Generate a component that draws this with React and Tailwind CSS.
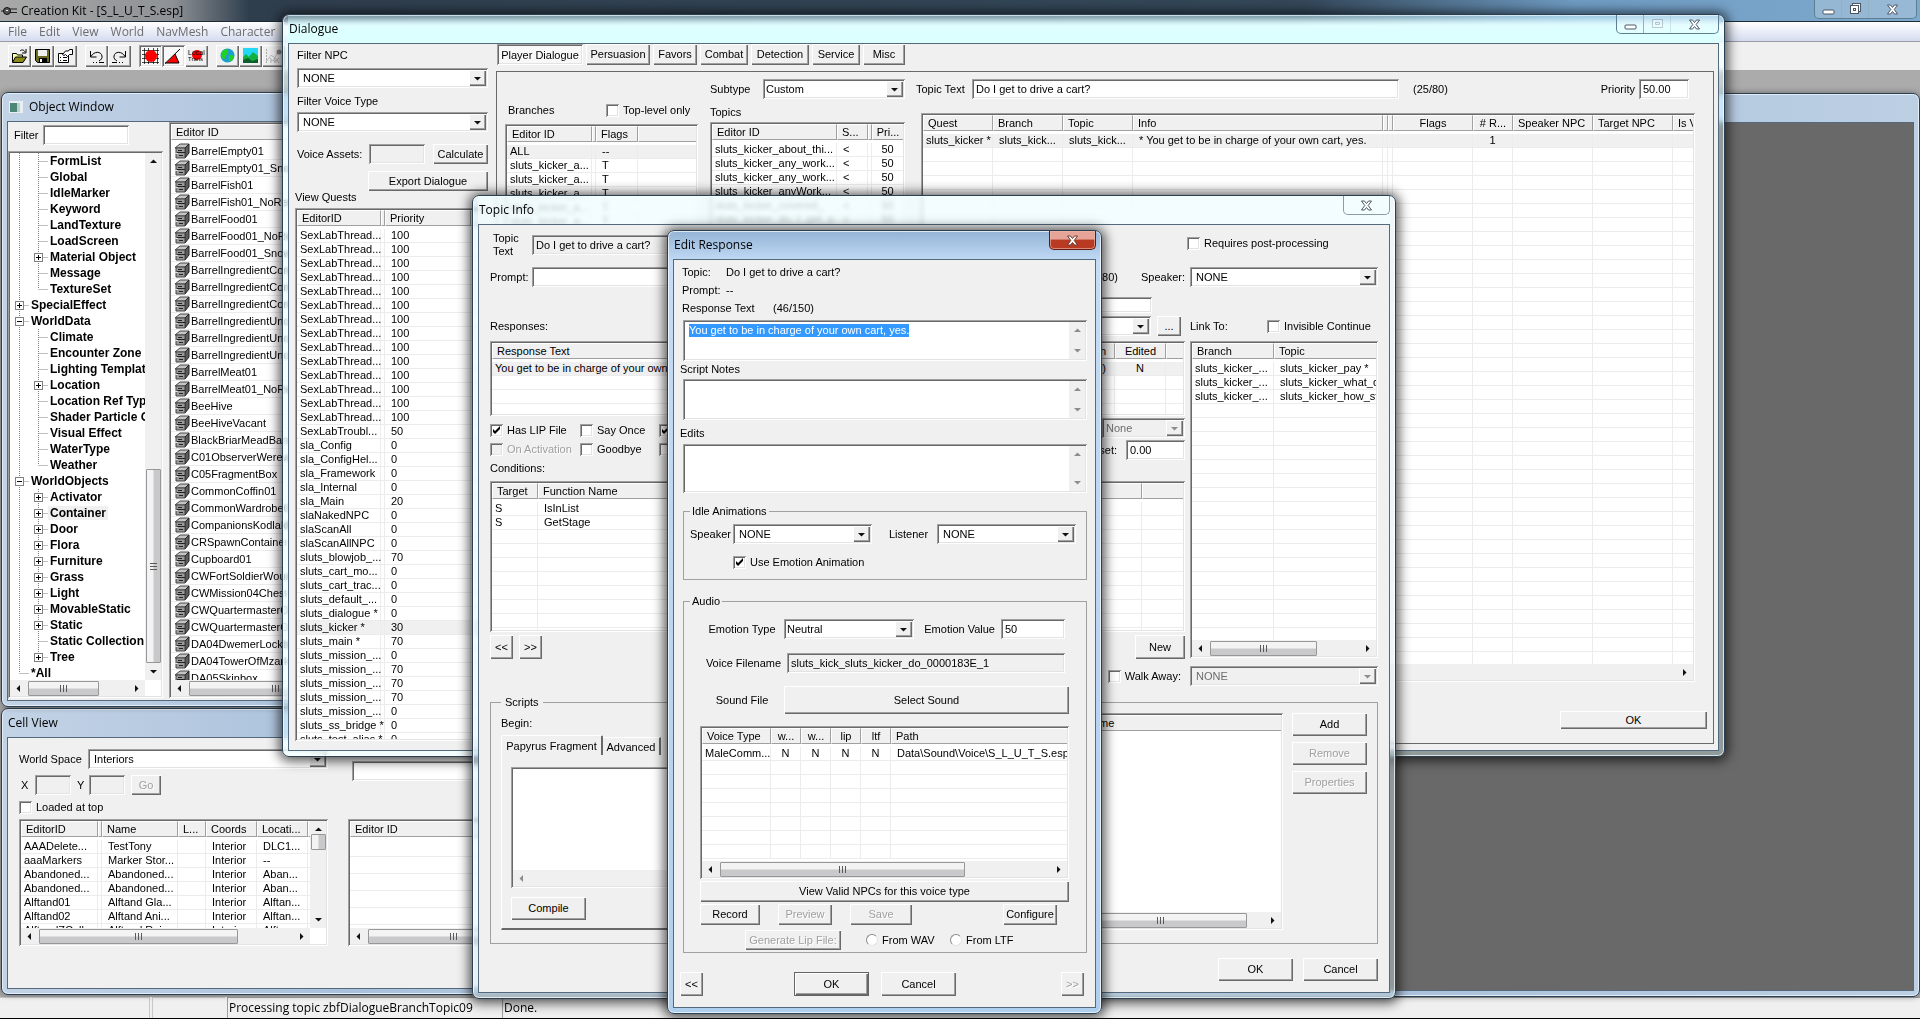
import clsx from 'clsx';

const SUNKEN = 'shadow-[inset_1px_1px_#a0a0a0,inset_-1px_-1px_#fff,inset_2px_2px_#696969,inset_-2px_-2px_#e3e3e3]';
const RAISED = 'shadow-[inset_1px_1px_#fff,inset_-1px_-1px_#696969,inset_-2px_-2px_#a0a0a0]';

const TREE = [
  ['FormList'], ['Global'], ['IdleMarker'], ['Keyword'], ['LandTexture'], ['LoadScreen'],
  ['Material Object', '+'], ['Message'], ['TextureSet', '', 'last'],
  ['SpecialEffect', '+', 'root'], ['WorldData', '-', 'root'],
  ['Climate'], ['Encounter Zone'], ['Lighting Template'], ['Location', '+'], ['Location Ref Type'],
  ['Shader Particle Geometry'], ['Visual Effect'], ['WaterType'], ['Weather', '', 'last'],
  ['WorldObjects', '-', 'root'],
  ['Activator', '+'], ['Container', '+'], ['Door', '+'], ['Flora', '+'], ['Furniture', '+'], ['Grass', '+'],
  ['Light', '+'], ['MovableStatic', '+'], ['Static', '+'], ['Static Collection'], ['Tree', '+', 'last'],
  ['*All', '', 'end'],
];

const CONTAINERS = [
  'BarrelEmpty01', 'BarrelEmpty01_Snow', 'BarrelFish01', 'BarrelFish01_NoRespawn', 'BarrelFood01',
  'BarrelFood01_NoRespawn', 'BarrelFood01_Snow', 'BarrelIngredientCommon01', 'BarrelIngredientCommon02',
  'BarrelIngredientCommon03', 'BarrelIngredientUncommon01', 'BarrelIngredientUncommon02',
  'BarrelIngredientUncommon03', 'BarrelMeat01', 'BarrelMeat01_NoRespawn', 'BeeHive', 'BeeHiveVacant',
  'BlackBriarMeadBarrel', 'C01ObserverWerewolf', 'C05FragmentBox', 'CommonCoffin01', 'CommonWardrobe01',
  'CompanionsKodlakBox', 'CRSpawnContainer', 'Cupboard01', 'CWFortSoldierWound', 'CWMission04Chest',
  'CWQuartermasterChest', 'CWQuartermasterCrate', 'DA04DwemerLockbox', 'DA04TowerOfMzark', 'DA05Skinbox',
];

const QUESTS = [
  ...Array.from({ length: 14 }, () => ['SexLabThread...', '', '100']),
  ['SexLabTroubl...', '', '50'],
  ['sla_Config', '', '0'],
  ['sla_ConfigHel...', '', '0'],
  ['sla_Framework', '', '0'],
  ['sla_Internal', '', '0'],
  ['sla_Main', '', '20'],
  ['slaNakedNPC', '', '0'],
  ['slaScanAll', '', '0'],
  ['slaScanAllNPC', '', '0'],
  ['sluts_blowjob_...', '', '70'],
  ['sluts_cart_mo...', '', '0'],
  ['sluts_cart_trac...', '', '0'],
  ['sluts_default_...', '', '0'],
  ['sluts_dialogue *', '', '0'],
  ['sluts_kicker *', '', '30'],
  ['sluts_main *', '', '70'],
  ['sluts_mission_...', '', '0'],
  ['sluts_mission_...', '', '70'],
  ['sluts_mission_...', '', '70'],
  ['sluts_mission_...', '', '70'],
  ['sluts_mission_...', '', '0'],
  ['sluts_ss_bridge *', '', '0'],
  ['sluts_test_alias *', '', '0'],
];

const CELLS = [
  ['AAADelete...', '', 'TestTony', '', 'Interior', 'DLC1...'],
  ['aaaMarkers', '', 'Marker Stor...', '', 'Interior', '--'],
  ['Abandoned...', '', 'Abandoned...', '', 'Interior', 'Aban...'],
  ['Abandoned...', '', 'Abandoned...', '', 'Interior', 'Aban...'],
  ['Alftand01', '', 'Alftand Gla...', '', 'Interior', 'Alftan...'],
  ['Alftand02', '', 'Alftand Ani...', '', 'Interior', 'Alftan...'],
  ['AlftandZCell', '', 'Alftand Rui...', '', 'Interior', 'Alftan...'],
];

function Button({ className, children, primary, disabled }) {
  return (
    <button
      type="button"
      disabled={disabled}
      className={clsx(
        'shrink-0 whitespace-nowrap bg-[#f0f0f0] text-center leading-[13px]',
        primary ? 'border border-[#646464]' : '',
        disabled ? 'text-[#a0a0a0] [text-shadow:1px_1px_#fff]' : 'text-black',
        RAISED,
        className,
      )}
    >
      {children}
    </button>
  );
}

function Arrow({ dir = 'down', muted }) {
  const d = {
    down: 'M1 3h7L4.5 6.5z',
    up: 'M1 6h7L4.5 2.5z',
    left: 'M6 1v7L2.5 4.5z',
    right: 'M3 1v7l3.500-3.500z',
  }[dir];
  return (
    <svg width="9" height="9" viewBox="0 0 9 9" aria-hidden="true">
      <path d={d} fill={muted ? '#8c8c8c' : '#111'} />
    </svg>
  );
}

function Select({ id, label, value, disabled, className, pad = 'pl-1' }) {
  return (
    <div className={clsx('flex h-5 shrink-0 p-[2px]', SUNKEN, disabled ? 'bg-[#f0f0f0]' : 'bg-white', className)}>
      <select
        id={id}
        aria-label={label}
        disabled={disabled}
        defaultValue={value}
        className={clsx('min-w-0 flex-1 appearance-none bg-transparent outline-none', pad, disabled ? 'text-[#6d6d6d]' : 'text-black')}
      >
        <option>{value}</option>
      </select>
      <span className={clsx('grid w-[17px] place-items-center bg-[#f0f0f0]', RAISED)}>
        <Arrow muted={disabled} />
      </span>
    </div>
  );
}

function Input({ id, label, value = '', disabled, height = 'h-5', className }) {
  return (
    <input
      id={id}
      aria-label={label}
      defaultValue={value}
      readOnly={disabled}
      className={clsx('min-w-0 shrink-0 px-1 text-black outline-none', height, SUNKEN, disabled ? 'bg-[#f0f0f0]' : 'bg-white', className)}
    />
  );
}

function Check({ label, checked, disabled, className }) {
  return (
    <label className={clsx('flex h-4 items-center gap-1 whitespace-nowrap', disabled && 'text-[#a0a0a0] [text-shadow:1px_1px_#fff]', className)}>
      <span className="grid">
        <input
          type="checkbox"
          defaultChecked={checked}
          disabled={disabled}
          className={clsx('peer col-start-1 row-start-1 size-[13px] appearance-none', SUNKEN, disabled ? 'bg-[#f0f0f0]' : 'bg-white')}
        />
        <svg className="pointer-events-none invisible col-start-1 row-start-1 peer-checked:visible" width="13" height="13" viewBox="0 0 13 13">
          <path d="M3 5v3l2 2 5-5V2L5 7z" fill="#000" />
        </svg>
      </span>
      {label}
    </label>
  );
}

function Radio({ label, className }) {
  return (
    <label className={clsx('flex items-center gap-1 whitespace-nowrap', className)}>
      <input type="radio" name="lip-source" className="size-3 appearance-none rounded-full border border-[#8a8a8a] border-r-[#e3e3e3] border-b-[#e3e3e3] bg-white" />
      {label}
    </label>
  );
}

function HScroll({ thumb, muted, className }) {
  return (
    <div className={clsx('flex h-4 shrink-0 items-center bg-[#f0f0f0] px-1', className)}>
      <Arrow dir="left" muted={muted} />
      <span className="flex-1 pl-[5px]">
        {thumb && (
          <span className={clsx('flex h-[15px] items-center justify-center gap-[2px] rounded-[1px] border border-[#979797] bg-linear-to-b from-[#f3f3f3] from-45% to-[#c9c9cc] to-55%', thumb)}>
            <i className="h-[7px] w-px bg-[#5a5a5a]" />
            <i className="h-[7px] w-px bg-[#5a5a5a]" />
            <i className="h-[7px] w-px bg-[#5a5a5a]" />
          </span>
        )}
      </span>
      <Arrow dir="right" muted={muted} />
    </div>
  );
}

function VScroll({ thumb, top, muted, grip }) {
  return (
    <div className="flex w-4 shrink-0 flex-col items-center bg-[#f0f0f0] py-1">
      <Arrow dir="up" muted={muted} />
      <span className={clsx('w-[15px] flex-1', top)}>
        {thumb && (
          <span className={clsx('flex flex-col items-center justify-center gap-[2px] rounded-[1px] border border-[#979797] bg-linear-to-r from-[#f3f3f3] from-45% to-[#c9c9cc] to-55%', thumb)}>
            {grip && [0, 1, 2].map(i => <i key={i} className="h-px w-[7px] bg-[#5a5a5a]" />)}
          </span>
        )}
      </span>
      <Arrow dir="down" muted={muted} />
    </div>
  );
}

// Report-style list: header strip, grid lines, blank rows down to the bottom edge
function ListView({ cols, rows = [], blank = 0, selected, tall, hThumb, hMuted, vThumb, className, icon, label }) {
  const all = [...rows, ...Array.from({ length: blank }, () => [])];
  return (
    <div className={clsx('flex flex-col overflow-hidden bg-white p-[2px]', SUNKEN, className)}>
      <div className="flex min-h-0 flex-1">
        <div className="min-w-0 flex-1 overflow-hidden">
          <table aria-label={label} className="w-full table-fixed border-separate border-spacing-0">
            <colgroup>
              {cols.map((c, i) => <col key={i} className={c[1]} />)}
            </colgroup>
            <thead>
              <tr>
                {cols.map((c, i) => (
                  <th key={i} className="p-0 pb-[3px] text-left font-normal">
                    <div className={clsx(
                      'h-4 overflow-hidden whitespace-nowrap border-t border-l border-t-white border-l-white border-b border-b-[#a0a0a0] bg-[#f0f0f0] leading-[15px]',
                      c[0] && !c[2] && 'pl-1',
                      c[2],
                      i < cols.length - 1 && 'border-r border-r-[#a0a0a0]',
                    )}>
                      {c[0]}
                    </div>
                  </th>
                ))}
              </tr>
            </thead>
            <tbody>
              {all.map((r, ri) => (
                <tr key={ri} className={ri === selected ? 'bg-[#f0f0f0]' : ''}>
                  {cols.map((c, i) => (
                    <td key={i} className={clsx(
                      'border-b border-b-[#ececec] py-0 pr-0 whitespace-nowrap',
                      i < cols.length - 1 && 'border-r border-r-[#ececec]',
                      tall ? 'h-[17px] leading-4' : 'h-[14px] leading-[13px]',
                      !c[2] && (i === 0 ? 'pl-[3px]' : 'pl-[6px]'),
                      c[2],
                    )}>
                      {icon && i === 0 && r[0] ? <span className="flex items-center gap-px"><ContainerIcon />{r[0]}</span> : r[i]}
                    </td>
                  ))}
                </tr>
              ))}
            </tbody>
          </table>
        </div>
        {vThumb && <VScroll thumb={vThumb} />}
      </div>
      {(hThumb || hMuted) && <HScroll thumb={hThumb} muted={hMuted} className={vThumb && 'mr-4'} />}
    </div>
  );
}

function Memo({ id, label, value, className }) {
  return (
    <div className={clsx('flex bg-white p-[2px]', SUNKEN, className)}>
      <div className="min-w-0 flex-1 pt-[2px] pl-1">
        {value
          ? <textarea id={id} aria-label={label} defaultValue={value} rows="1" className="field-sizing-content block h-[13px] resize-none overflow-hidden bg-[#3399ff] leading-[13px] whitespace-nowrap text-white outline-none" />
          : <textarea id={id} aria-label={label} className="block size-full resize-none outline-none" />}
      </div>
      <VScroll muted />
    </div>
  );
}

function ContainerIcon() {
  return (
    <svg className="shrink-0" width="15" height="16" viewBox="0 0 15 16" aria-hidden="true">
      <path d="M0 5l5-4h9l-4 4z" fill="#c4c4c4" stroke="#444" />
      <path d="M10 5l4-4v9l-4 5z" fill="#5c5c5c" stroke="#222" />
      <path d="M1 5h9v10H1z" fill="#9a9a9a" stroke="#444" />
      <path d="M2 9.500h8M3 7.500h4M4 12.500h4" stroke="#222" />
      <path d="M0 10h3v1H0z" fill="#ddd" />
    </svg>
  );
}

function Guide({ kind, box }) {
  const v = { line: 'M9.500 0v16', tee: 'M9.500 0v16M9.500 8.500H19', elbow: 'M9.500 0v8M9.500 8.500H19' }[kind];
  return (
    <svg className="shrink-0" width="19" height="16" viewBox="0 0 19 16" aria-hidden="true">
      <path d={v} stroke="#808080" strokeDasharray="1 1" fill="none" />
      {box && (
        <>
          <rect x="5.500" y="4.500" width="8" height="8" fill="#fff" stroke="#808080" />
          <path d={box === '+' ? 'M7 8.500h5M9.500 6v5' : 'M7 8.500h5'} stroke="#000" />
        </>
      )}
    </svg>
  );
}

function TreeRow({ name, box, kind }) {
  const root = kind === 'root' || kind === 'end';
  return (
    <li className="flex h-4 items-center whitespace-nowrap">
      {root
        ? <Guide kind={kind === 'end' ? 'elbow' : 'tee'} box={box} />
        : <><Guide kind="line" /><Guide kind={kind === 'last' ? 'elbow' : 'tee'} box={box} /></>}
      <span className={clsx('px-[2px]', name === 'Container' && 'bg-[#f0f0f0]')}>{name}</span>
    </li>
  );
}

function CloseGlyph({ className = 'text-[#4c5764]' }) {
  return (
    <svg className={className} width="13" height="11" viewBox="0 0 13 11" aria-hidden="true">
      <path d="M1.500 1h3l2 2.500L8.500 1h3l-3.300 4.500L11.500 10h-3l-2-2.500-2 2.500h-3l3.300-4.500z" fill="#fff" stroke="currentColor" />
    </svg>
  );
}

function CaptionButtons({ dimMax }) {
  return (
    <div className="flex h-[19px] rounded-b-[5px] border border-t-0 border-[#5d7f92] bg-white/20">
      <button type="button" aria-label="Minimize" className="grid w-[27px] place-items-center border-r border-[#8fb3c2]">
        <svg width="13" height="11" viewBox="0 0 13 11"><rect x="1" y="6" width="11" height="4" rx="1" fill="#fff" stroke="#4c5764" /></svg>
      </button>
      <button type="button" aria-label="Maximize" className={clsx('grid w-[27px] place-items-center border-r border-[#8fb3c2]', dimMax && 'opacity-30')}>
        <svg width="13" height="12" viewBox="0 0 13 12">
          {dimMax
            ? <path d="M1.500 1.500h10v8h-10zM4.500 4.500h4v2h-4z" fill="#fff" stroke="#4c5764" />
            : (
              <>
                <rect x="3.500" y="0.500" width="8" height="8" fill="#fff" stroke="#4c5764" />
                <rect x="1.500" y="2.500" width="8" height="8" fill="#fff" stroke="#4c5764" />
                <rect x="4.500" y="5.500" width="2" height="2" fill="#fff" stroke="#4c5764" />
              </>
            )}
        </svg>
      </button>
      <button type="button" aria-label="Close" className="grid w-[47px] place-items-center"><CloseGlyph /></button>
    </div>
  );
}

function Win({ title, icon, className, glass, buttons, font, children }) {
  return (
    <section
      aria-label={title}
      className={clsx('absolute flex flex-col rounded-[7px] border border-[#2b3f52] px-[5px] pb-[5px] text-[11px] leading-[14px] text-black', glass, font, className)}
    >
      <header className="flex h-7 shrink-0 items-start justify-between">
        <h2 className="flex h-7 items-center gap-[6px] pl-px font-['Open_Sans',sans-serif] text-[12px]">{icon}{title}</h2>
        {buttons}
      </header>
      <div className="flex min-h-0 flex-1 flex-col overflow-hidden border border-[#55697d] bg-[#f0f0f0]">{children}</div>
    </section>
  );
}

const SANS = "font-['Liberation_Sans',sans-serif]";
const BLUE = 'bg-linear-to-r from-[#c3d3e6] via-[#a9c0db] to-[#bccfe3] shadow-[inset_0_0_0_1px_#e4eef8,0_0_6px_#0006]';
const DEEP = 'shadow-[inset_0_0_0_1px_#ffffffb0,0_1px_12px_3px_#000a]';

function ObjectWindow() {
  return (
    <Win
      title="Object Window"
      font={SANS}
      glass={BLUE}
      className="top-[22px] left-px h-[615px] w-[700px]"
      icon={(
        <svg className="ml-px" width="14" height="12" viewBox="0 0 14 12" aria-hidden="true">
          <rect width="14" height="12" fill="#e8eef2" />
          <rect x="1" y="2" width="7" height="9" fill="#4d8577" />
          <rect x="8" y="2" width="3" height="9" fill="#b9cfd0" />
        </svg>
      )}
    >
      <div className="flex min-h-0 flex-1 pb-[2px]">
        <div className="flex w-[155px] shrink-0 flex-col pt-[3px]">
          <div className="flex items-center pl-[6px]">
            <label htmlFor="obj-filter" className="w-[29px]">Filter</label>
            <Input id="obj-filter" className="w-[86px]" />
          </div>
          <div className={clsx('mt-[6px] flex min-h-0 flex-1 flex-col bg-white p-[2px]', SUNKEN)}>
            <div className="flex min-h-0 flex-1">
              <ul className="min-w-0 flex-1 overflow-hidden text-[12px] font-bold">
                {TREE.map(([name, box, kind]) => <TreeRow key={name} name={name} box={box} kind={kind} />)}
              </ul>
              <VScroll top="flex flex-col justify-end pb-1" thumb="h-[194px]" grip />
            </div>
            <HScroll thumb="w-[71px]" className="mr-4" />
          </div>
        </div>
        <ListView
          label="Objects"
          className="ml-[6px] flex-1"
          cols={[['Editor ID', 'w-[300px]', 'pl-1'], ['Count', 'w-auto']]}
          rows={CONTAINERS.map(n => [n])}
          tall
          icon
          hThumb="w-[172px]"
        />
      </div>
    </Win>
  );
}

function CellView() {
  return (
    <Win title="Cell View" font={SANS} glass={BLUE} className="top-[638px] left-px h-[287px] w-[700px]">
      <div className="flex gap-5 pt-[11px] pl-[11px]">
        <div className="w-[309px] shrink-0">
          <div className="flex items-center">
            <label htmlFor="world-space" className="w-[69px]">World Space</label>
            <Select id="world-space" value="Interiors" className="flex-1" />
          </div>
          <div className="mt-[5px] flex h-[22px] items-center pl-[2px]">
            <label htmlFor="cell-x" className="w-[14px]">X</label>
            <Input id="cell-x" disabled className="w-9" />
            <label htmlFor="cell-y" className="ml-[6px] w-3">Y</label>
            <Input id="cell-y" disabled className="w-9" />
            <Button disabled className="ml-[6px] h-5 w-[30px]">Go</Button>
          </div>
          <Check label="Loaded at top" className="mt-[3px]" />
          <ListView
            label="Cells"
            className="mt-1 h-[127px]"
            cols={[['EditorID', 'w-[77px]'], ['', 'w-1'], ['Name', 'w-[76px]'], ['L...', 'w-7'], ['Coords', 'w-[51px]'], ['Locati...', 'w-[51px]'], ['', 'w-auto']]}
            rows={CELLS}
            vThumb="h-4"
            hThumb="w-[199px]"
          />
        </div>
        <div className="min-w-0 flex-1 pt-3">
          <Input label="Cell filter" className="ml-1 w-[300px]" />
          <ListView label="Cell references" className="mt-[38px] h-[127px]" cols={[['Editor ID', 'w-auto']]} blank={6} tall hThumb="w-[170px]" />
        </div>
      </div>
    </Win>
  );
}

function RenderWindow() {
  return (
    <section aria-label="Render Window" className={clsx('absolute top-[23px] right-0 bottom-0 left-[700px] rounded-[7px] border border-[#2b3f52] px-[5px] pt-7 pb-[5px]', BLUE)}>
      <div className="h-full border border-[#55697d] bg-[#696969]" />
    </section>
  );
}

const TABS = [
  ['Persuasion', 'w-16'], ['Favors', 'w-11'], ['Combat', 'w-12'], ['Detection', 'w-[58px]'], ['Service', 'w-12'], ['Misc', 'w-[42px]'],
];

function DialogueWindow() {
  return (
    <Win
      title="Dialogue"
      font={SANS}
      glass={clsx('bg-[#d8fbff]/30 backdrop-blur-[3px] backdrop-brightness-110', DEEP)}
      className="top-[14px] left-[282px] h-[743px] w-[1443px] [&>header]:bg-linear-to-b [&>header]:from-[#b8e8f8]/20 [&>header]:to-[#dcffff] [&>header]:to-60%"
      buttons={<CaptionButtons dimMax />}
    >
      <div className="flex min-h-0 flex-1">
        <div className="flex w-[207px] shrink-0 flex-col pt-1 pr-2 pb-[9px] pl-[6px]">
          <div className="flex flex-col pl-[2px]">
            <label htmlFor="filter-npc">Filter NPC</label>
            <Select id="filter-npc" value="NONE" className="mt-[6px]" />
            <label htmlFor="filter-voice" className="mt-[6px]">Filter Voice Type</label>
            <Select id="filter-voice" value="NONE" className="mt-1" />
            <div className="mt-3 flex items-center">
              <label htmlFor="voice-assets" className="w-[72px] whitespace-nowrap">Voice Assets:</label>
              <Input id="voice-assets" disabled className="w-14" />
              <Button className="ml-auto h-5 w-[55px]">Calculate</Button>
            </div>
            <Button className="mt-[7px] h-5 w-[120px] self-end">Export Dialogue</Button>
          </div>
          <h3 className="leading-3">View Quests</h3>
          <ListView
            label="View Quests"
            className="mt-[5px] min-h-0 flex-1"
            cols={[['EditorID', 'w-[84px]'], ['', 'w-1'], ['Priority', 'w-[86px]'], ['', 'w-auto']]}
            rows={QUESTS}
            selected={28}
          />
        </div>

        <div className="mr-1 mb-[6px] flex min-w-0 flex-1 flex-col">
          <div className="flex h-[21px] gap-[3px] pl-px">
            <button type="button" className={clsx('w-[86px] bg-[#f8f8f8] pt-px', SUNKEN)}>Player Dialogue</button>
            {TABS.map(([t, w]) => <Button key={t} className={w}>{t}</Button>)}
          </div>
          <div className="mt-[6px] flex min-h-0 flex-1 border border-[#696969] pl-2">
            <div className="flex w-[193px] shrink-0 flex-col pt-[31px]">
              <div className="flex h-[14px] items-center pl-[3px]">
                <h3 className="w-[98px]">Branches</h3>
                <Check label="Top-level only" />
              </div>
              <ListView
                label="Branches"
                className="mt-[7px] flex-1"
                cols={[['Editor ID', 'w-[85px]'], ['', 'w-1'], ['Flags', 'w-[42px]'], ['', 'w-auto']]}
                rows={[['ALL', '', '--'], ...Array.from({ length: 12 }, () => ['sluts_kicker_a...', '', 'T'])]}
                selected={0}
              />
            </div>
            <div className="ml-3 flex w-[195px] shrink-0 flex-col pt-[7px]">
              <div className="flex items-center">
                <label htmlFor="subtype" className="w-[53px]">Subtype</label>
                <Select id="subtype" value="Custom" pad="pl-px" className="flex-1" />
              </div>
              <h3 className="mt-[6px]">Topics</h3>
              <ListView
                label="Topics"
                className="mt-[3px] flex-1"
                cols={[['Editor ID', 'w-[125px]'], ['S...', 'w-[31px]'], ['', 'w-1'], ['Pri...', 'w-auto', 'text-center']]}
                rows={[
                  ['sluts_kicker_about_thi...', '<', '', '50'],
                  ['sluts_kicker_any_work...', '<', '', '50'],
                  ['sluts_kicker_any_work...', '<', '', '50'],
                  ['sluts_kicker_anyWork...', '<', '', '50'],
                  ['sluts_kicker_covered_', '<', '', '50'],
                  ['sluts_kicker_do_I_get_a', '<', '', '50'],
                ]}
                blank={6}
              />
            </div>
            <div className="ml-[11px] flex min-w-0 flex-1 flex-col pt-[7px]">
              <div className="flex items-center pr-6">
                <label htmlFor="topic-text" className="w-14">Topic Text</label>
                <Input id="topic-text" value="Do I get to drive a cart?" className="w-[427px]" />
                <span className="ml-[14px]">(25/80)</span>
                <label htmlFor="priority" className="ml-auto">Priority</label>
                <Input id="priority" value="50.00" className="ml-1 w-[50px]" />
              </div>
              <ListView
                label="Topic infos"
                className="mt-[14px] mr-[18px] ml-[5px] min-h-0 flex-1"
                cols={[
                  ['Quest', 'w-[70px]'], ['Branch', 'w-[70px]'], ['Topic', 'w-[70px]'], ['Info', 'w-[250px]'],
                  ['', 'w-[5px]'], ['', 'w-[5px]'], ['Flags', 'w-20', 'text-center'], ['# R...', 'w-10', 'text-center'],
                  ['Speaker NPC', 'w-20'], ['Target NPC', 'w-20'], ['Is Voiced', 'w-auto'],
                ]}
                rows={[['sluts_kicker *', 'sluts_kick...', 'sluts_kick...', '* You get to be in charge of your own cart, yes.', '', '', '', '1', '', '', '']]}
                blank={40}
                selected={0}
                hThumb="w-[400px]"
              />
              <Button className="mt-[29px] mr-[6px] mb-[14px] h-[18px] w-[147px] self-end">OK</Button>
            </div>
          </div>
        </div>
      </div>
    </Win>
  );
}

function TopicInfo() {
  return (
    <Win
      title="Topic Info"
      font={SANS}
      glass={clsx('bg-[#d4f2ff]/35 backdrop-blur-[2px]', DEEP)}
      className="top-[195px] left-[472px] h-[804px] w-[924px] [&>header]:bg-linear-to-b [&>header]:from-[#f4ffff]/70 [&>header]:to-[#f4ffff]/60"
      buttons={(
        <button type="button" aria-label="Close" className="grid h-[19px] w-[47px] place-items-center rounded-b-[5px] border border-t-0 border-[#8a9ba6]"><CloseGlyph /></button>
      )}
    >
      <div className="px-[11px]">
        <div className="flex">
          <div className="flex w-[695px] shrink-0 flex-col pt-[7px]">
            <div className="flex h-[26px] items-center">
              <label htmlFor="ti-topic" className="w-[42px] pr-2 pl-[3px] leading-[13px]">Topic Text</label>
              <Input id="ti-topic" disabled value="Do I get to drive a cart?" className="w-[540px]" />
            </div>
            <div className="mt-[9px] flex items-center">
              <label htmlFor="ti-prompt" className="w-[42px]">Prompt:</label>
              <Input id="ti-prompt" className="w-[540px]" />
              <span className="ml-auto">(0/80)</span>
              <label htmlFor="ti-speaker" className="ml-[23px]">Speaker:</label>
            </div>
            <Input label="Info note" height="h-4" className="mt-[10px] mr-[33px] w-[300px] self-end" />
            <div className="mt-[3px] flex items-center pr-1">
              <h3 className="mr-auto">Responses:</h3>
              <Select label="Shared info" value=" " className="w-[200px]" />
              <Button className="ml-[6px] h-5 w-6">...</Button>
            </div>
            <ListView
              label="Responses"
              className="mt-[5px] h-[75px]"
              cols={[['Response Text', 'w-[523px]'], ['Emotion', 'w-[100px]', 'text-right pr-[8px]'], ['Edited', 'w-[51px]', 'text-center'], ['', 'w-auto']]}
              rows={[['You get to be in charge of your own cart, yes.', 'Neutral (50)', 'N', '']]}
              blank={4}
              selected={0}
            />
            <div className="flex h-11 justify-between">
              <div className="grid grid-cols-[90px_79px_auto] content-start gap-y-[3px] pt-[6px]">
                <Check label="Has LIP File" checked />
                <Check label="Say Once" />
                <Check label="Random" checked />
                <Check label="On Activation" disabled />
                <Check label="Goodbye" />
                <Check label="Random End" />
              </div>
              <div className="flex flex-col items-end gap-[2px] pt-[2px]">
                <Select label="Favor level" value="None" disabled pad="pl-[2px]" className="w-[83px]" />
                <div className="flex items-center">
                  <label htmlFor="offset" className="mr-[9px]">Reset:</label>
                  <Input id="offset" value="0.00" className="w-[59px]" />
                </div>
              </div>
            </div>
            <h3 className="mt-px">Conditions:</h3>
            <ListView
              label="Conditions"
              className="mt-[6px] h-[151px]"
              cols={[['Target', 'w-[46px]'], ['Function Name', 'w-[550px]'], ['', 'w-[54px]'], ['', 'w-auto']]}
              rows={[['S', 'IsInList', '', ''], ['S', 'GetStage', '', '']]}
              blank={8}
            />
            <div className="mt-[3px] flex gap-[6px]">
              <Button className="h-6 w-[23px]">&lt;&lt;</Button>
              <Button className="h-6 w-[23px]">&gt;&gt;</Button>
              <Button className="ml-auto h-6 w-[50px]">New</Button>
            </div>
            <div className="mt-[7px] flex h-5 items-center justify-end pr-1">
              <Check label="Walk Away:" />
            </div>
          </div>

          <div className="ml-[2px] min-w-0 flex-1 pt-[10px]">
            <Check label="Requires post-processing" />
            <Select id="ti-speaker" value="NONE" className="mt-4 ml-[3px]" />
            <div className="mt-[29px] ml-[3px] flex h-5 items-center">
              <h3 className="w-[77px]">Link To:</h3>
              <Check label="Invisible Continue" />
            </div>
            <ListView
              label="Link To"
              className="mt-[5px] ml-[3px] h-[317px]"
              cols={[['Branch', 'w-[82px]'], ['Topic', 'w-auto']]}
              rows={[['sluts_kicker_...', 'sluts_kicker_pay *'], ['sluts_kicker_...', 'sluts_kicker_what_do'], ['sluts_kicker_...', 'sluts_kicker_how_start']]}
              blank={19}
              hThumb="w-[107px]"
            />
            <Select label="Walk away topic" value="NONE" disabled className="mt-2 ml-[3px]" />
          </div>
        </div>

        <fieldset className="mt-[9px] h-[249px] border border-[#a0a0a0] px-[10px]">
          <legend className="px-1">Scripts</legend>
          <div className="flex pt-1">
            <div className="w-[500px] shrink-0 pt-[3px]">
              <h3>Begin:</h3>
              <div className="mt-[5px] flex h-5 items-end">
                <button type="button" className="h-5 w-[102px] rounded-t-[2px] border-t border-l border-white border-r-2 border-r-[#696969]">Papyrus Fragment</button>
                <button type="button" className="h-[18px] w-[58px] border-t border-white border-r-2 border-r-[#696969]">Advanced</button>
              </div>
              <div className="h-[175px] border-l border-white border-r-2 border-r-[#696969] border-b-2 border-b-[#696969] px-[9px] pt-3">
                <div className={clsx('flex h-[121px] flex-col bg-white p-[2px]', SUNKEN)}>
                  <textarea aria-label="Papyrus Fragment" className="min-h-0 flex-1 resize-none outline-none" />
                  <HScroll muted />
                </div>
                <Button className="mt-[9px] h-[23px] w-[75px]">Compile</Button>
              </div>
            </div>
            <ListView label="Scripts" className="ml-auto h-[217px] w-[229px]" cols={[['', 'w-6'], ['Name', 'w-auto']]} hThumb="w-[173px]" />
            <div className="ml-[9px] flex flex-col gap-[6px]">
              <Button className="h-[23px] w-[75px]">Add</Button>
              <Button disabled className="h-[23px] w-[75px]">Remove</Button>
              <Button disabled className="h-[23px] w-[75px]">Properties</Button>
            </div>
          </div>
        </fieldset>

        <div className="mt-[14px] flex justify-end gap-[10px]">
          <Button className="h-[23px] w-[75px]">OK</Button>
          <Button className="h-[23px] w-[75px]">Cancel</Button>
        </div>
      </div>
    </Win>
  );
}

function EditResponse() {
  return (
    <Win
      title="Edit Response"
      font={SANS}
      glass={clsx('bg-linear-to-b from-[#94b4d6] via-[#c3dcf7] via-4% to-[#afcfef]', DEEP)}
      className="top-[230px] left-[667px] h-[784px] w-[435px]"
      buttons={(
        <button type="button" aria-label="Close" className="grid h-[19px] w-[47px] place-items-center rounded-b-[5px] border border-t-0 border-[#5b1c14] bg-linear-to-b from-[#e5a497] from-45% to-[#b83a22] to-50% shadow-[inset_0_0_0_1px_#f0b8a8a0]"><CloseGlyph className="text-[#6b3b34]" /></button>
      )}
    >
      <div className="pt-[3px] pr-2 pl-[6px]">
        <dl className="grid grid-cols-[44px_1fr] pl-[2px] leading-[18px]">
          <dt>Topic:</dt>
          <dd>Do I get to drive a cart?</dd>
          <dt>Prompt:</dt>
          <dd>--</dd>
        </dl>
        <div className="flex pl-[2px] leading-[18px]">
          <label htmlFor="response-text" className="w-[91px]">Response Text</label>
          <span>(46/150)</span>
        </div>
        <Memo id="response-text" value="You get to be in charge of your own cart, yes." className="mt-[3px] ml-[3px] h-[41px]" />
        <label htmlFor="script-notes" className="mt-px block">Script Notes</label>
        <Memo id="script-notes" className="mt-[3px] ml-[3px] h-[41px]" />
        <label htmlFor="edits" className="mt-[6px] block">Edits</label>
        <Memo id="edits" className="mt-1 ml-[3px] h-[49px]" />

        <fieldset className="mt-[11px] ml-[3px] h-[76px] border border-[#a0a0a0] pl-[6px]">
          <legend className="px-[2px]">Idle Animations</legend>
          <div className="flex items-center pt-[6px]">
            <label htmlFor="er-speaker" className="w-[43px]">Speaker</label>
            <Select id="er-speaker" value="NONE" className="w-[139px]" />
            <label htmlFor="er-listener" className="ml-[17px] w-12">Listener</label>
            <Select id="er-listener" value="NONE" className="w-[139px]" />
          </div>
          <Check label="Use Emotion Animation" checked className="mt-[10px] ml-[43px]" />
        </fieldset>

        <fieldset className="mt-[14px] ml-[3px] h-[359px] border border-[#a0a0a0] pr-[17px] pl-[6px]">
          <legend className="px-[2px]">Audio</legend>
          <div className="pt-[11px] pl-[10px]">
            <div className="flex items-center pr-1">
              <label htmlFor="emotion-type" className="w-[84px] text-center">Emotion Type</label>
              <Select id="emotion-type" value="Neutral" pad="pl-px" className="w-[130px]" />
              <label htmlFor="emotion-value" className="ml-auto">Emotion Value</label>
              <Input id="emotion-value" value="50" className="ml-[6px] w-16" />
            </div>
            <div className="mt-[14px] flex items-center pr-1">
              <label htmlFor="voice-filename" className="w-[87px] text-center">Voice Filename</label>
              <Input id="voice-filename" disabled value="sluts_kick_sluts_kicker_do_0000183E_1" className="flex-1" />
            </div>
            <div className="mt-[13px] flex items-center">
              <span className="w-[84px] text-center">Sound File</span>
              <Button className="h-7 w-[285px]">Select Sound</Button>
            </div>
            <ListView
              label="Voice files"
              className="mt-3 h-[153px]"
              cols={[
                ['Voice Type', 'w-[69px]'], ['w...', 'w-[30px]', 'text-center'], ['w...', 'w-[30px]', 'text-center'],
                ['lip', 'w-[30px]', 'text-center'], ['ltf', 'w-[30px]', 'text-center'], ['Path', 'w-auto'],
              ]}
              rows={[['MaleComm...', 'N', 'N', 'N', 'N', 'Data\\Sound\\Voice\\S_L_U_T_S.esp\\']]}
              blank={7}
              hThumb="w-[245px]"
            />
            <Button className="mt-[2px] block h-[21px] w-full">View Valid NPCs for this voice type</Button>
            <div className="mt-[2px] flex h-[21px] pr-3">
              <Button className="w-[60px]">Record</Button>
              <Button disabled className="ml-[18px] w-[54px]">Preview</Button>
              <Button disabled className="ml-[18px] w-[62px]">Save</Button>
              <Button className="ml-auto w-[54px]">Configure</Button>
            </div>
            <div className="mt-[5px] flex h-5 items-stretch pl-[45px]">
              <Button disabled className="w-24">Generate Lip File:</Button>
              <Radio label="From WAV" className="ml-[25px] w-[84px]" />
              <Radio label="From LTF" />
            </div>
          </div>
        </fieldset>

        <div className="mt-[19px] flex h-6">
          <Button className="w-[23px]">&lt;&lt;</Button>
          <Button primary className="ml-[91px] w-[75px]">OK</Button>
          <Button className="ml-3 w-[75px]">Cancel</Button>
          <Button disabled className="mr-[3px] ml-auto w-[23px]">&gt;&gt;</Button>
        </div>
      </div>
    </Win>
  );
}

function Tool({ label, pressed, children }) {
  return (
    <button type="button" aria-label={label} className={clsx('grid h-[22px] w-[23px] place-items-center', pressed ? clsx('bg-[#f8f8f8]', SUNKEN) : RAISED)}>
      <svg width="17" height="16" viewBox="0 0 17 16">{children}</svg>
    </button>
  );
}

function Toolbar() {
  return (
    <div className="flex h-7 shrink-0 items-center bg-[#f0f0f0] pl-2">
      <Tool label="Open">
        <path d="M1.500 14V5.500h4l1 1.500h5v2" fill="#ffffb0" stroke="#000" />
        <path d="M1.500 14.500l3-5.500h11l-3.500 5.500z" fill="#8a8a1c" stroke="#000" />
        <path d="M9 3c2-2 4-1 5 1M15 1v4h-4" fill="none" stroke="#000" />
      </Tool>
      <Tool label="Save">
        <path d="M1.500 1.500h14v13h-12l-2-2z" fill="#6b6b24" stroke="#000" />
        <path d="M4 2h9v6H4z" fill="#f0f0f0" />
        <path d="M5 10h8v5H5z" fill="#000" />
        <path d="M6 11h2v3H6z" fill="#fff" />
      </Tool>
      <Tool label="Preferences">
        <path d="M1.500 5.500h10v9h-10z" fill="#fff" stroke="#000" />
        <path d="M3 9.500h1M6 9.500h4M3 12.500h1M6 12.500h4" stroke="#000" />
        <path d="M5.500 6.500l3-3.500h3l1-1.500h3v5h-3l-2 2-2-2-1.500 1z" fill="#fff" stroke="#000" />
      </Tool>
      <span className="w-2" />
      <Tool label="Undo">
        <path d="M2.500 3v6h6M3 8.500C6 3 13 3 14 8c.5 2-1 4-3 5M5 14.500h1M8 14.500h1M11 14.500h5" fill="none" stroke="#000" />
      </Tool>
      <Tool label="Redo">
        <path d="M14.500 3v6h-6M14 8.500C11 3 4 3 3 8c-.5 2 1 4 3 5M1 14.500h5M8 14.500h1M11 14.500h1" fill="none" stroke="#000" />
      </Tool>
      <span className="w-2" />
      <Tool label="Snap to grid" pressed>
        <path d="M2.500 0v16M6.500 0v16M11.500 0v16M15.500 0v16M0 2.500h17M0 6.500h17M0 10.500h17M0 14.500h17" stroke="#000" strokeOpacity=".7" />
        <circle cx="9" cy="8" r="6" fill="#f00" />
      </Tool>
      <Tool label="Snap to angle" pressed>
        <path d="M1 15L10 6l4 9z" fill="#f00" />
        <path d="M0 15.500L15 1M0 15h14M10 6l4 9" fill="none" stroke="#000" />
      </Tool>
      <Tool label="Local transform">
        <circle cx="9" cy="7" r="5" fill="#f00" />
        <text x="0" y="7" fontSize="7" fontFamily="Liberation Sans, sans-serif">Local</text>
        <text x="0" y="13" fontSize="6" fontFamily="Liberation Sans, sans-serif">Trans</text>
      </Tool>
      <span className="w-2" />
      <Tool label="World">
        <circle cx="8.500" cy="7.500" r="7" fill="#1c9fc9" />
        <path d="M3 4c3-4 6-3 6 0s-3 3-3 6-3 0-4-2zM10 8c2-2 5-1 5 1s-3 5-5 4z" fill="#21d321" />
      </Tool>
      <Tool label="Landscape">
        <path d="M1 0h15v15H1z" fill="#22d8f4" />
        <path d="M1 9l3-3 3 3 4-5 5 4v7H1z" fill="#12b03c" />
        <path d="M1 12l5-2 4 3 6-2v4H1z" fill="#0a5f2a" />
      </Tool>
      <Tool label="Havok">
        <path d="M1.500 1v14M1.500 13l5-6 3 3 4-6" fill="none" stroke="#aaa" strokeDasharray="2 1" />
        <circle cx="14" cy="4" r="2.500" fill="#888" />
        <text x="5" y="15" fontSize="7" fill="#999" fontFamily="Liberation Sans, sans-serif">HK</text>
      </Tool>
    </div>
  );
}

export default function App() {
  return (
    <div className="relative flex h-screen flex-col overflow-hidden bg-[#ababab] font-['Open_Sans',sans-serif] text-[12px] text-black">
      <header className="flex h-[22px] shrink-0 items-start justify-between border-b border-[#1c2a38] bg-[linear-gradient(90deg,#a9a9a9_0%,#8e9296_9%,#2f3e4d_13%,#34485a_68%,#6f9cc4_82%,#7fa9cc_100%)]">
        <h1 className="flex h-[22px] items-center gap-1 pl-px">
          <svg width="16" height="12" viewBox="0 0 16 12" aria-hidden="true">
            <path d="M0 6h6M8 4h8M8 7.500h8" stroke="#222" />
            <circle cx="6" cy="6" r="3.500" fill="#555" stroke="#111" />
            <path d="M5 5h2v1H5z" fill="#eee" />
          </svg>
          Creation Kit - [S_L_U_T_S.esp]
        </h1>
        <div className="pr-[3px]"><CaptionButtons /></div>
      </header>
      <nav className="flex h-5 shrink-0 items-center gap-3 border-b border-[#9a9aa8] bg-linear-to-b from-white to-[#d5dcf0] pl-2 text-[#6d6d6d]">
        {['File', 'Edit', 'View', 'World', 'NavMesh', 'Character'].map(m => <a key={m} href="#">{m}</a>)}
      </nav>
      <Toolbar />
      <main className="relative min-h-0 flex-1">
        <RenderWindow />
        <CellView />
        <ObjectWindow />
      </main>
      <footer className="flex h-[22px] shrink-0 items-stretch gap-[2px] border-b border-black bg-[#f0f0f0] leading-5 whitespace-nowrap">
        <span className="w-[150px] border-t border-r border-[#c8c8c8]" />
        <span className="w-[73px] border-t border-l border-[#c8c8c8]" />
        <span className="w-[273px] border-t border-l border-[#a0a0a0] pl-px">Processing topic zbfDialogueBranchTopic09</span>
        <span className="flex-1 border-t border-l border-[#a0a0a0] pl-px">Done.</span>
      </footer>

      <DialogueWindow />
      <TopicInfo />
      <EditResponse />
    </div>
  );
}
